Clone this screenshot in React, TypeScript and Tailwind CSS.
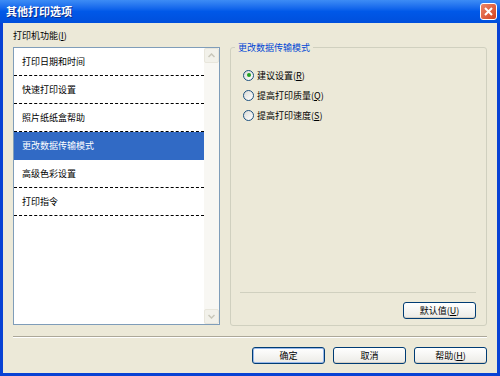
const items = ['打印日期和时间', '快速打印设置', '照片纸纸盒帮助', '更改数据传输模式', '高级色彩设置', '打印指令']

const font = { fontFamily: '"Noto Sans CJK SC", "Liberation Sans", sans-serif' }

function XpButton({ children, focused }: { children: React.ReactNode; focused?: boolean }) {
  return (
    <button
      className={`h-[17px] w-[73px] rounded-[3px] border border-[#003c74] bg-gradient-to-b from-white to-[#ecebe6] text-[9px] leading-none text-black ${
        focused ? 'shadow-[inset_0_0_0_1px_#98b8ea]' : 'shadow-[inset_0_-1px_0_#d6d0c5]'
      }`}
    >
      {children}
    </button>
  )
}

function Radio({ label, checked }: { label: React.ReactNode; checked?: boolean }) {
  return (
    <div className="flex h-[20px] items-center gap-[3px]">
      <span className="flex h-[11px] w-[11px] items-center justify-center rounded-full border border-[#1c5180] bg-gradient-to-br from-[#dcdcd7] to-white">
        {checked && <span className="h-[4px] w-[4px] rounded-full bg-[#21a121]" />}
      </span>
      <span className="text-[9px] leading-none text-black">{label}</span>
    </div>
  )
}

function Chevron({ up }: { up?: boolean }) {
  return (
    <svg width="7" height="5" viewBox="0 0 7 5" className={up ? '' : 'rotate-180'}>
      <path d="M0.5 4 L3.5 1 L6.5 4" fill="none" stroke="#c9c7ba" strokeWidth="1.5" />
    </svg>
  )
}

export default function App() {
  return (
    <div className="flex h-[376px] w-[500px] flex-col bg-[#0842d4]" style={font}>
      {/* Title bar */}
      <div className="flex h-[23px] items-center justify-between bg-gradient-to-b from-[#3d8cf5] via-[#0058e8] to-[#004fdc] pl-[6px] pr-[3px]">
        <span className="text-[11px] font-bold text-white [text-shadow:1px_1px_0_#0a2a8a]">其他打印选项</span>
        <span className="flex h-[17px] w-[17px] items-center justify-center rounded-[3px] border border-white bg-gradient-to-br from-[#ec8466] to-[#d2401c]">
          <svg width="9" height="9" viewBox="0 0 9 9">
            <path d="M1 1 L8 8 M8 1 L1 8" stroke="white" strokeWidth="2" />
          </svg>
        </span>
      </div>

      {/* Body */}
      <div className="mx-[3px] mb-[3px] flex flex-1 flex-col bg-[#ece9d8] px-[10px] pt-[6px]">
        <div className="flex items-start gap-[10px]">
          {/* Left: list */}
          <div className="w-[207px]">
            <div className="mb-[5px] h-[13px] text-[9px] leading-[13px] text-black">
              打印机功能(<span className="underline">I</span>)
            </div>
            <div className="flex h-[278px] border border-[#7f9db9] bg-white">
              <div className="flex-1">
                {items.map((item, i) => (
                  <div
                    key={item}
                    className={`flex h-[28px] items-center border-b border-dashed pl-[8px] text-[9px] ${
                      i === 3 ? 'border-transparent bg-[#316ac5] text-white' : 'border-black text-black'
                    }`}
                  >
                    {item}
                  </div>
                ))}
              </div>
              <div className="flex w-[15px] flex-col justify-between bg-[#f8f7f3]">
                <div className="flex h-[15px] items-center justify-center rounded-[2px] border border-[#e8e6dc] bg-[#f2f1ea]">
                  <Chevron up />
                </div>
                <div className="flex h-[15px] items-center justify-center rounded-[2px] border border-[#e8e6dc] bg-[#f2f1ea]">
                  <Chevron />
                </div>
              </div>
            </div>
          </div>

          {/* Right: group box */}
          <fieldset className="mt-[12px] flex h-[285px] flex-1 flex-col rounded-[3px] border border-[#d0d0bf] pb-[6px] pl-[12px] pr-[10px]">
            <legend className="ml-[-8px] px-[3px] text-[9px] leading-[13px] text-[#0046d5]">更改数据传输模式</legend>
            <div className="pt-[11px]">
              <Radio checked label={<>建议设置(<span className="underline">R</span>)</>} />
              <Radio label={<>提高打印质量(<span className="underline">Q</span>)</>} />
              <Radio label={<>提高打印速度(<span className="underline">S</span>)</>} />
            </div>
            <div className="flex-1" />
            <div className="ml-[-3px] border-t border-[#d0d0bf]" />
            <div className="mt-[9px] flex justify-end">
              <XpButton>默认值(<span className="underline">U</span>)</XpButton>
            </div>
          </fieldset>
        </div>

        <div className="mt-[10px] border-t border-b border-t-[#aca899] border-b-white" />

        <div className="mt-[9px] flex justify-end gap-[8px]">
          <XpButton focused>确定</XpButton>
          <XpButton>取消</XpButton>
          <XpButton>帮助(<span className="underline">H</span>)</XpButton>
        </div>
      </div>
    </div>
  )
}
